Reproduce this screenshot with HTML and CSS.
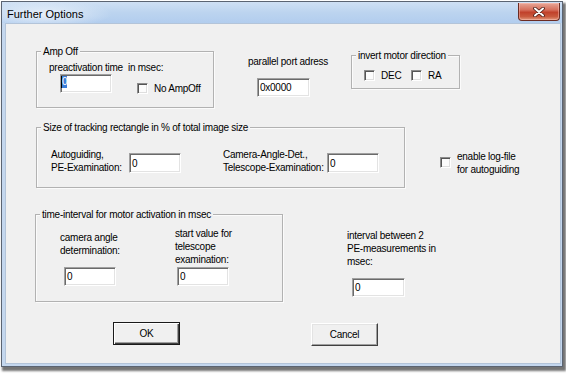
FILE: index.html
```html
<!DOCTYPE html>
<html>
<head>
<meta charset="utf-8">
<title>Further Options</title>
<link rel="stylesheet" href="styles.css">
</head>
<body>
<div class="window">
  <div class="titlebar">
    <span class="title">Further Options</span>
    <div class="close">
      <svg width="12" height="10" viewBox="0 0 12 10">
        <path d="M2 1.5 L10 8.5 M10 1.5 L2 8.5" stroke="#4a1a14" stroke-width="3.6" stroke-linecap="round"/>
        <path d="M2 1.5 L10 8.5 M10 1.5 L2 8.5" stroke="#ffffff" stroke-width="2" stroke-linecap="round"/>
      </svg>
    </div>
  </div>
  <div class="client">
    <div class="row row1">
      <div class="group amp">
        <span class="legend">Amp Off</span>
        <div class="txt">preactivation time&nbsp; in msec:</div>
        <div class="amp-line">
          <div class="edit e-amp"><span class="caret"></span><span class="sel">0</span></div>
          <div class="check chk-noamp"><span class="box"></span>No AmpOff</div>
        </div>
      </div>
      <div class="port">
        <div class="txt">parallel port adress</div>
        <div class="edit e-port">0x0000</div>
      </div>
      <div class="group invert">
        <span class="legend">invert motor direction</span>
        <div class="checks">
          <div class="check chk-dec"><span class="box"></span>DEC</div>
          <div class="check"><span class="box"></span>RA</div>
        </div>
      </div>
    </div>

    <div class="row row2">
      <div class="group size">
        <span class="legend">Size of tracking rectangle in % of total image size</span>
        <div class="size-line">
          <div class="txt lbl-auto">Autoguiding,<br>PE-Examination:</div>
          <div class="edit e-size">0</div>
          <div class="txt lbl-cam">Camera-Angle-Det.,<br>Telescope-Examination:</div>
          <div class="edit e-size">0</div>
        </div>
      </div>
      <div class="check log">
        <span class="box"></span>
        <span class="txt">enable log-file<br>for autoguiding</span>
      </div>
    </div>

    <div class="row row3">
      <div class="group time">
        <span class="legend">time-interval for motor activation in msec</span>
        <div class="time-line">
          <div class="col col1">
            <div class="txt">camera angle<br>determination:</div>
            <div class="edit">0</div>
          </div>
          <div class="col col2">
            <div class="txt">start value for<br>telescope<br>examination:</div>
            <div class="edit">0</div>
          </div>
        </div>
      </div>
      <div class="interval">
        <div class="txt">interval between 2<br>PE-measurements in<br>msec:</div>
        <div class="edit e-int">0</div>
      </div>
    </div>

    <div class="row row4">
      <div class="btn btn-ok">OK</div>
      <div class="btn btn-cancel">Cancel</div>
    </div>
  </div>
</div>
</body>
</html>
```

FILE: styles.css
```css
* { box-sizing: border-box; }
html, body { margin: 0; padding: 0; background: #ffffff; }
body {
  width: 566px;
  height: 374px;
  overflow: hidden;
  font-family: "Liberation Sans", Arial, sans-serif;
  font-size: 10px;
  letter-spacing: -0.25px;
  line-height: 13px;
  color: #000;
}

.window {
  margin: 1px 0 0 1px;
  width: 562px;
  height: 366px;
  border: 1px solid #5b6472;
  background: #c4d7ee;
  padding: 0 1px 2px 3px;
  box-shadow: 2px 3px 2px 1px rgba(70, 70, 70, 0.75);
  display: flex;
  flex-direction: column;
}

.titlebar {
  height: 21px;
  margin: 0 -1px 0 -3px;
  padding-left: 5px;
  display: flex;
  justify-content: space-between;
  align-items: flex-start;
  background:
    radial-gradient(ellipse 70px 14px at 40px 12px, rgba(236, 243, 251, 0.9), rgba(236, 243, 251, 0) 100%),
    linear-gradient(to bottom, #cfe0f4 0%, #bcd4ef 50%, #b2cdee 100%);
}
.title {
  margin-top: 3px;
  font-size: 11px;
  letter-spacing: 0;
  line-height: 19px;
  color: #000;
}
.close {
  width: 42px;
  height: 18px;
  margin: 1px 2px 0 0;
  border: 1px solid #6b2b22;
  border-top: none;
  border-radius: 0 0 4px 4px;
  background: linear-gradient(to bottom, #e8a798 0%, #d6705d 40%, #c1412b 55%, #c95a3e 80%, #e29a7e 100%);
  box-shadow: inset 0 0 0 1px rgba(255, 200, 190, 0.45);
  display: flex;
  align-items: center;
  justify-content: center;
}

.client {
  height: 341px;
  background: #f0f0f0;
  border: 1px solid #b3c4d9;
}

.row { display: flex; align-items: flex-start; }
.row1 { height: 103px; }
.row2 { height: 87px; }
.row3 { height: 108px; }

.txt { white-space: nowrap; }

.group {
  position: relative;
  border: 1px solid #b2b2b2;
  box-shadow: 1px 1px 0 #fbfbfb, inset 1px 1px 0 #fbfbfb;
}
.legend {
  position: absolute;
  top: -7px;
  left: 4px;
  padding: 0 2px;
  background: #f0f0f0;
  line-height: 13px;
  white-space: nowrap;
}

.edit {
  width: 52px;
  height: 19px;
  background: #fff;
  border: 1px solid;
  border-color: #a0a0a0 #ffffff #ffffff #a0a0a0;
  box-shadow: inset 1px 1px 0 #6a6a6a, inset -1px -1px 0 #e3e3e3;
  padding: 0 0 0 2px;
  line-height: 15px;
  display: flex;
  align-items: center;
}

.check { display: flex; align-items: center; white-space: nowrap; }
.box {
  width: 11px;
  height: 11px;
  margin-right: 6px;
  flex: none;
  background: #fcfcfc;
  border: 1px solid;
  border-color: #8c8c8c #ffffff #ffffff #8c8c8c;
  box-shadow: inset 1px 1px 0 #555, inset -1px -1px 0 #dedede;
}

/* Amp Off */
.amp {
  margin: 27px 0 0 30px;
  width: 178px;
  height: 57px;
  padding: 9px 0 0 12px;
}
.amp-line { display: flex; align-items: flex-start; }
.e-amp { margin-left: 11px; align-items: flex-start; padding-left: 0; }
.caret { width: 1px; height: 12px; background: #000; margin-top: 1px; }
.sel {
  margin-top: 1px;
  background: #3b7ed8;
  color: #fff;
  line-height: 12px;
  padding: 0 0 0 0;
}
.chk-noamp { margin: 8px 0 0 25px; }

/* port */
.port { margin: 31px 0 0 34px; width: 80px; }
.e-port { margin: 10px 0 0 9px; width: 53px; }

/* invert */
.invert {
  margin: 31px 0 0 23px;
  width: 109px;
  height: 34px;
  padding: 13px 0 0 12px;
}
.checks { display: flex; }
.chk-dec { width: 47px; }

/* size */
.size {
  margin-left: 30px;
  width: 369px;
  height: 61px;
  padding: 20px 0 0 14px;
}
.size-line { display: flex; align-items: flex-start; }
.lbl-auto { width: 78px; }
.e-size { margin-top: 5px; height: 20px; }
.lbl-cam { width: 104px; margin-left: 42px; }

.log { margin: 23px 0 0 35px; align-items: flex-start; }
.log .box { margin-top: 7px; }

/* time */
.time {
  margin-left: 29px;
  width: 248px;
  height: 88px;
  padding: 12px 0 0 24px;
}
.time-line { display: flex; align-items: flex-start; }
.col1 { width: 115px; }
.col1 .txt { margin-top: 4px; }
.col1 .edit { margin: 10px 0 0 4px; }
.col2 .edit { margin: 1px 0 0 2px; }

.interval { margin: 15px 0 0 64px; }
.e-int { margin: 10px 0 0 5px; width: 53px; }

/* buttons */
.btn {
  width: 67px;
  height: 23px;
  display: flex;
  align-items: center;
  justify-content: center;
  background: #f0f0f0;
  border: 1px solid;
  border-color: #ffffff #404040 #404040 #ffffff;
  box-shadow: inset -1px -1px 0 #a0a0a0, inset 1px 1px 0 #e3e3e3;
}
.btn-ok {
  margin-left: 107px;
  border: 1px solid #1a1a1a;
  box-shadow: inset 1px 1px 0 #ffffff, inset -1px -1px 0 #404040, inset -2px -2px 0 #a0a0a0;
}
.btn-cancel { margin: 1px 0 0 131px; }
```
